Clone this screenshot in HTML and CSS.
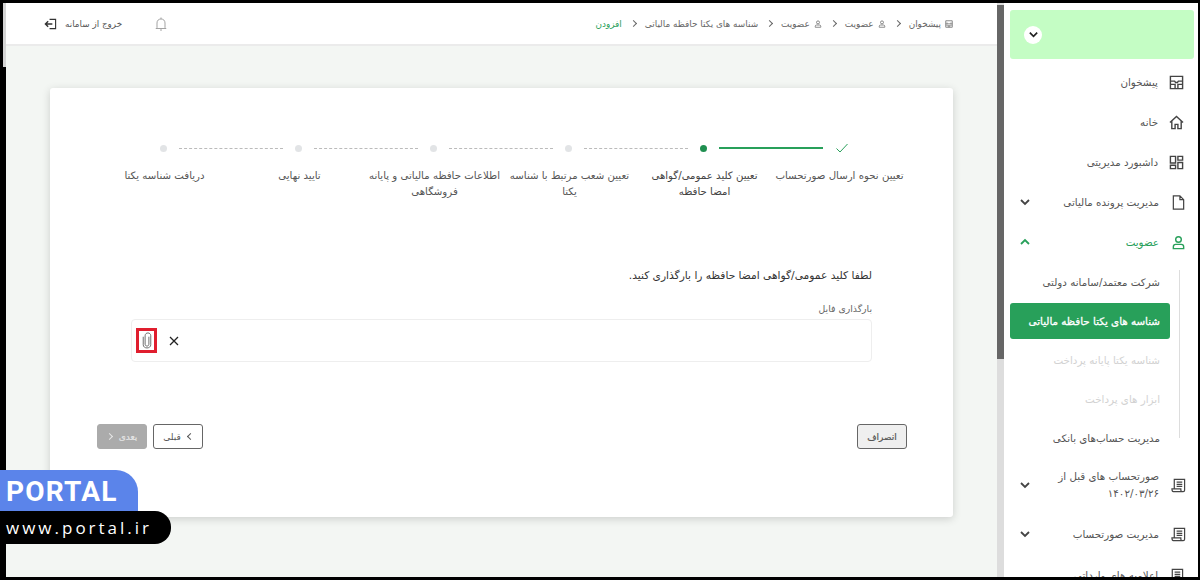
FILE: index.html
```html
<!DOCTYPE html>
<html lang="fa">
<head>
    <meta charset="UTF-8">
    <meta name="viewport" content="width=device-width, initial-scale=1.0">
    <title>شناسه های یکتا حافظه مالیاتی</title>
    <link rel="stylesheet" href="styles.css">
</head>
<body>
    <svg class="defs" aria-hidden="true">
        <symbol id="i-panel" viewBox="0 0 16 16"><path d="M1.500 1.500h13v13h-13zM1.500 6.500h4.500l1 1.500h2l1-1.500h4.500M1.500 10h5v4.500M9.500 14.500V10h5" fill="none" stroke="currentColor" stroke-width="1.500"/></symbol>
        <symbol id="i-user" viewBox="0 0 16 16"><circle cx="8" cy="4.800" r="3" fill="none" stroke="currentColor" stroke-width="1.500"/><path d="M2.500 14.500v-2c0-1.500 1-2.500 2.500-2.500h6c1.500 0 2.500 1 2.500 2.500v2z" fill="none" stroke="currentColor" stroke-width="1.500"/></symbol>
        <symbol id="i-receipt" viewBox="0 0 16 16"><path d="M3.500 11.500V1.500h11V13c0 1-.7 1.500-1.500 1.500H2.500C1.500 14.500 1 13.500 1 11.500h9.500V13c0 1 .7 1.500 1.500 1.500M6 4.500h6M6 6.800h6M6 9h6" fill="none" stroke="currentColor" stroke-width="1.300"/></symbol>
        <symbol id="i-down" viewBox="0 0 12 12"><path d="M2 4l4 4 4-4" fill="none" stroke="currentColor" stroke-width="1.800"/></symbol>
    </svg>

    <div class="frame">
        <div class="edge"></div>

        <div class="main">
            <div class="header">
                <div class="crumbs">
                    <svg class="crumb-icon"><use href="#i-panel"/></svg><span>پیشخوان</span>
                    <i class="chev chev-right crumb-sep"></i>
                    <svg class="crumb-icon"><use href="#i-user"/></svg><span>عضویت</span>
                    <i class="chev chev-right crumb-sep"></i>
                    <svg class="crumb-icon"><use href="#i-user"/></svg><span>عضویت</span>
                    <i class="chev chev-right crumb-sep"></i>
                    <span>شناسه های یکتا حافظه مالیاتی</span>
                    <i class="chev chev-right crumb-sep"></i>
                    <span class="crumb-now">افزودن</span>
                </div>
                <div class="header-tools">
                    <svg class="bell" viewBox="0 0 12 14"><path d="M2 10.500V6c0-2.500 1.600-4 4-4s4 1.500 4 4v4.500l1 1H1zM5 13h2M6 .5V2" fill="none" stroke="currentColor" stroke-width=".9"/></svg>
                    <div class="logout">
                        <span>خروج از سامانه</span>
                        <svg class="logout-icon" viewBox="0 0 14 12"><path d="M6 1h6.500v10H6" fill="none" stroke="currentColor" stroke-width="1.200"/><path d="M9 6H2M4.500 3L1.500 6l3 3" fill="none" stroke="currentColor" stroke-width="1.500"/></svg>
                    </div>
                </div>
            </div>

            <div class="card">
                <div class="track">
                    <svg class="step-check" viewBox="0 0 14 12"><path d="M1.500 6.500l3.500 3.500 7.500-8" fill="none" stroke="currentColor" stroke-width="1"/></svg>
                    <span class="step-line done"></span>
                    <span class="step-dot now"></span>
                    <span class="step-line"></span>
                    <span class="step-dot"></span>
                    <span class="step-line"></span>
                    <span class="step-dot"></span>
                    <span class="step-line"></span>
                    <span class="step-dot"></span>
                    <span class="step-line"></span>
                    <span class="step-dot"></span>
                </div>
                <div class="step-labels">
                    <p>تعیین نحوه ارسال صورتحساب</p>
                    <p class="active">تعیین کلید عمومی/گواهی<br>امضا حافظه</p>
                    <p>تعیین شعب مرتبط با شناسه یکتا</p>
                    <p>اطلاعات حافظه مالیاتی و پایانه فروشگاهی</p>
                    <p>تایید نهایی</p>
                    <p>دریافت شناسه یکتا</p>
                </div>

                <div class="upload">
                    <p class="upload-title">لطفا کلید عمومی/گواهی امضا حافظه را بارگذاری کنید.</p>
                    <label class="upload-label">بارگذاری فایل</label>
                    <div class="upload-field">
                        <span class="clip-mark">
                            <svg class="clip" viewBox="0 0 10 18"><path d="M7 5v8c0 2.500-4 2.500-4 0V4" fill="none" stroke="currentColor" stroke-width="1"/><path d="M1 5v8.500c0 4.500 8 4.500 8 0V4c0-4-6-4-6 0" fill="none" stroke="currentColor" stroke-width="1"/></svg>
                        </span>
                        <svg class="clear" viewBox="0 0 10 10"><path d="M1 1l8 8M9 1l-8 8" fill="none" stroke="currentColor" stroke-width="1.300"/></svg>
                    </div>
                </div>

                <div class="actions">
                    <button class="btn btn-cancel">انصراف</button>
                    <div class="actions-nav">
                        <button class="btn btn-prev"><i class="chev chev-left"></i>قبلی</button>
                        <button class="btn btn-next">بعدی<i class="chev chev-right"></i></button>
                    </div>
                </div>
            </div>
        </div>

        <div class="scroll"><div class="scroll-thumb"></div></div>

        <div class="side">
            <div class="side-top">
                <span class="side-toggle"><svg><use href="#i-down"/></svg></span>
            </div>
            <div class="nav-item">
                <svg class="nav-icon"><use href="#i-panel"/></svg><span>پیشخوان</span>
            </div>
            <div class="nav-item">
                <svg class="nav-icon" viewBox="0 0 16 16"><path d="M1 8l7-6.500L15 8M3 6.500v8h3.500V10h3v4.500H13v-8" fill="none" stroke="currentColor" stroke-width="1.500"/></svg><span>خانه</span>
            </div>
            <div class="nav-item">
                <svg class="nav-icon" viewBox="0 0 16 16"><path d="M1.500 1.500h5.500v7H1.500zM9.500 1.500h5v4h-5zM9.500 8h5v6.500h-5zM1.500 11h5.500v3.500H1.500z" fill="none" stroke="currentColor" stroke-width="1.500"/></svg><span>داشبورد مدیریتی</span>
            </div>
            <div class="nav-item parent">
                <svg class="nav-icon" viewBox="0 0 16 16"><path d="M2.500 1h7l4 4v10h-11zM9.500 1v4h4" fill="none" stroke="currentColor" stroke-width="1.300"/></svg><span>مدیریت پرونده مالیاتی</span>
                <svg class="nav-arrow"><use href="#i-down"/></svg>
            </div>
            <div class="nav-item parent open">
                <svg class="nav-icon"><use href="#i-user"/></svg><span>عضویت</span>
                <svg class="nav-arrow up"><use href="#i-down"/></svg>
            </div>
            <div class="sub-list">
                <div class="sub-item">شرکت معتمد/سامانه دولتی</div>
                <div class="sub-item current">شناسه های یکتا حافظه مالیاتی</div>
                <div class="sub-item off">شناسه یکتا پایانه پرداخت</div>
                <div class="sub-item off">ابزار های پرداخت</div>
                <div class="sub-item">مدیریت حساب‌های بانکی</div>
            </div>
            <div class="nav-item parent tall">
                <svg class="nav-icon"><use href="#i-receipt"/></svg><span>صورتحساب های قبل از<br>۱۴۰۲/۰۳/۲۶</span>
                <svg class="nav-arrow"><use href="#i-down"/></svg>
            </div>
            <div class="nav-item parent">
                <svg class="nav-icon"><use href="#i-receipt"/></svg><span>مدیریت صورتحساب</span>
                <svg class="nav-arrow"><use href="#i-down"/></svg>
            </div>
            <div class="nav-item">
                <svg class="nav-icon"><use href="#i-receipt"/></svg><span>اعلامیه های وارداتی</span>
            </div>
        </div>
    </div>

    <div class="portal">
        <div class="portal-name">PORTAL</div>
        <div class="portal-url">www.portal.ir</div>
    </div>
</body>
</html>
```

FILE: styles.css
```css
* {
    margin: 0;
    padding: 0;
    box-sizing: border-box;
}
body {
    width: 1200px;
    height: 580px;
    overflow: hidden;
    background-color: #FFFFFF;
    font-family: "DejaVu Sans", "Noto Sans", sans-serif;
    font-size: 10px;
    color: #555555;
}
.defs {
    display: none;
}
.frame {
    display: flex;
    width: 1200px;
    height: 580px;
    border: 3px solid #000000;
    border-right-width: 2px;
    overflow: hidden;
}
.edge {
    flex: none;
    width: 3px;
    height: 100%;
    background: linear-gradient(#d4d4d4 64px, #000000 64px);
}
.chev {
    display: inline-block;
    flex: none;
    width: 5px;
    height: 5px;
    border-top: 1px solid currentColor;
    border-right: 1px solid currentColor;
}
.chev-right {
    transform: rotate(45deg);
}
.chev-left {
    transform: rotate(-135deg);
}

/* main column */
.main {
    flex: none;
    width: 991px;
    height: 100%;
    background-color: #F3F6F3;
    direction: rtl;
}
.header {
    display: flex;
    justify-content: space-between;
    align-items: center;
    height: 43px;
    padding: 0 44px 0 38px;
    background-color: #FFFFFF;
    border-bottom: 2px solid #EBEBEB;
}
.crumbs {
    display: flex;
    align-items: center;
    font-size: 8.900px;
    color: #666666;
}
.crumb-icon {
    width: 8px;
    height: 8px;
    margin-left: 4px;
}
.crumb-sep {
    margin: 0 9px;
}
.crumb-now {
    color: #28A05A;
}
.header-tools {
    display: flex;
    align-items: center;
    gap: 33px;
}
.bell {
    width: 12px;
    height: 14px;
    color: #999999;
}
.logout {
    display: flex;
    align-items: center;
    gap: 8px;
    font-size: 8.800px;
}
.logout-icon {
    width: 13px;
    height: 12px;
    color: #333333;
}

/* card */
.card {
    display: flex;
    flex-direction: column;
    height: 429px;
    margin: 42px 44px 0;
    padding: 0 46px 68px 47px;
    background-color: #FFFFFF;
    border-radius: 3px;
    box-shadow: 0 2px 8px rgba(0, 0, 0, .16);
}
.track {
    display: flex;
    align-items: center;
    gap: 12px;
    height: 14px;
    margin-top: 53px;
    padding-right: 58px;
}
.step-check {
    width: 14px;
    height: 12px;
    color: #28A05A;
}
.step-line {
    width: 104px;
    border-top: 1px dashed #BBBBBB;
}
.step-line.done {
    border-top: 2px solid #28A05A;
}
.step-dot {
    width: 7px;
    height: 7px;
    border-radius: 50%;
    background-color: #E2E4E6;
}
.step-dot.now {
    background-color: #1F8F50;
}
.step-labels {
    display: grid;
    grid-template-columns: repeat(6, 135px);
    margin-top: 13px;
    font-size: 10.200px;
    line-height: 16px;
    text-align: center;
}
.step-labels .active {
    color: #444444;
}
.upload {
    margin: 68px 35px 0 34px;
}
.upload-title {
    font-size: 10.650px;
    line-height: 16px;
    color: #333333;
}
.upload-label {
    display: block;
    margin-top: 18px;
    font-size: 9.300px;
    line-height: 14px;
    color: #666666;
}
.upload-field {
    display: flex;
    align-items: center;
    gap: 12px;
    height: 43px;
    margin-top: 3px;
    padding: 0 4px;
    border: 1px solid #EEEEEE;
    border-radius: 4px;
    direction: ltr;
}
.clip-mark {
    display: flex;
    justify-content: center;
    align-items: center;
    width: 21px;
    height: 25px;
    border: 3px solid #E01E2E;
}
.clip {
    width: 10px;
    height: 17px;
    color: #666666;
}
.clear {
    width: 10px;
    height: 10px;
    color: #222222;
}
.actions {
    display: flex;
    justify-content: space-between;
    align-items: center;
    margin-top: auto;
}
.actions-nav {
    display: flex;
    gap: 6px;
}
.btn {
    display: flex;
    justify-content: center;
    align-items: center;
    gap: 7px;
    width: 50px;
    height: 25px;
    border: 1px solid #666666;
    border-radius: 3px;
    background-color: #FFFFFF;
    font-family: inherit;
    font-size: 9px;
    color: #555555;
}
.btn-cancel {
    background-color: #EFEFEF;
    -webkit-text-stroke: .2px #555555;
}
.btn-next {
    border-color: #ABABAB;
    background-color: #ABABAB;
    color: #E6E6E6;
    -webkit-text-stroke: .2px #E6E6E6;
}

/* scrollbar */
.scroll {
    flex: none;
    width: 7px;
    height: 100%;
    background-color: #DDDDDD;
    padding-top: 2px;
}
.scroll-thumb {
    height: 354px;
    background-color: #666666;
}

/* sidebar */
.side {
    flex: 1;
    min-width: 0;
    padding: 7px 3px 0 0;
    direction: rtl;
    font-size: 10.300px;
}
.side-top {
    display: flex;
    justify-content: flex-end;
    align-items: center;
    height: 49px;
    margin: 0 1px 3px 6px;
    padding: 0 14px;
    background-color: #C4FDC4;
    border-radius: 3px;
}
.side-toggle {
    display: flex;
    justify-content: center;
    align-items: center;
    width: 18px;
    height: 18px;
    border-radius: 50%;
    background-color: #FFFFFF;
    color: #222222;
}
.side-toggle svg {
    width: 11px;
    height: 11px;
}
.nav-item {
    display: flex;
    align-items: center;
    gap: 11px;
    height: 40px;
    padding: 0 11px 0 15px;
}
.nav-item span {
    flex: 1;
    line-height: 17px;
}
.nav-icon {
    flex: none;
    width: 15px;
    height: 15px;
    color: #444444;
}
.nav-arrow {
    flex: none;
    width: 12px;
    height: 12px;
    color: #444444;
}
.nav-arrow.up {
    transform: rotate(180deg);
}
.nav-item.parent {
    padding-right: 9px;
    gap: 12px;
}
.nav-item.open,
.nav-item.open .nav-icon,
.nav-item.open .nav-arrow {
    color: #28A05A;
}
.nav-item.tall {
    height: 56px;
}
.nav-item.tall + .nav-item {
    height: 42px;
}
.sub-list {
    height: 195px;
    margin-right: 15px;
    background: linear-gradient(#DDDDDD, #DDDDDD) right 8px / 1px 168px no-repeat;
}
.sub-item {
    display: flex;
    align-items: center;
    height: 39px;
    margin-left: 8px;
    padding-right: 20px;
    white-space: nowrap;
}
.sub-item.current {
    height: 36px;
    margin: 2px 10px 1px 6px;
    padding-right: 10px;
    background-color: #28A05A;
    border-radius: 3px;
    -webkit-text-stroke: .3px #FFFFFF;
    color: #FFFFFF;
}
.sub-item.off {
    color: #D2D2D2;
}

/* watermark over the page */
.portal {
    position: absolute;
    left: 0;
    top: 470px;
}
.portal-name {
    width: 138px;
    height: 41px;
    padding-left: 6px;
    background-color: #5B84EA;
    border-radius: 0 22px 0 0;
    font-family: Roboto, sans-serif;
    font-size: 28px;
    font-weight: bold;
    letter-spacing: 1.200px;
    line-height: 43px;
    color: #FFFFFF;
}
.portal-url {
    width: 171px;
    height: 33px;
    padding-left: 6px;
    background-color: #000000;
    border-radius: 0 16px 16px 0;
    font-family: "Open Sans", sans-serif;
    font-size: 17px;
    letter-spacing: 3px;
    line-height: 33px;
    color: #FFFFFF;
}
```
